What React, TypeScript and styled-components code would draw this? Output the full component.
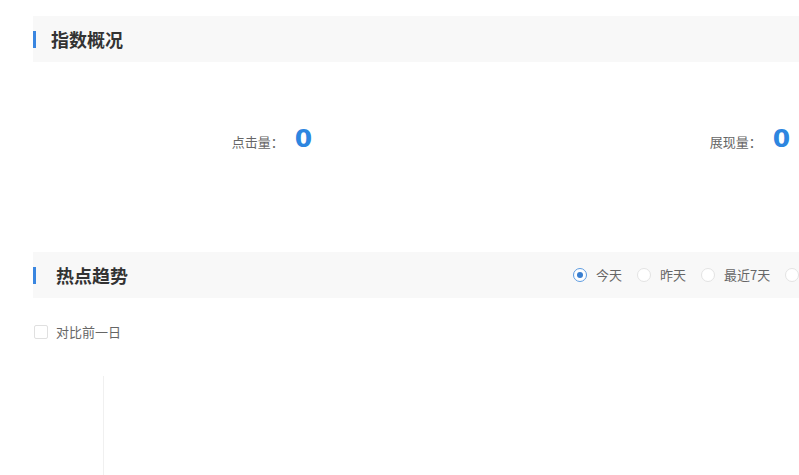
import React from "react";
import styled, { createGlobalStyle } from "styled-components";

const Global = createGlobalStyle`
  html, body { margin: 0; padding: 0; background: #fff; overflow: hidden; }
  body { font-family: "Liberation Sans", "Noto Sans CJK SC", sans-serif; }
  * { box-sizing: border-box; }
`;

const Page = styled.div`
  width: 766px;
  margin-left: 33px;
  padding-top: 16px;
  display: flex;
  flex-direction: column;
  overflow: hidden;
`;

const SectionHeader = styled.div`
  height: 46px;
  background: #f8f8f8;
  display: flex;
  align-items: center;
`;

const Accent = styled.span`
  width: 3px;
  height: 17px;
  background: #3a86e0;
  flex: none;
`;

const Title = styled.h2<{ $gap: number }>`
  margin: 0 0 0 ${(p) => p.$gap}px;
  font-family: "Noto Sans CJK SC", sans-serif;
  font-size: 18px;
  line-height: 24px;
  font-weight: 700;
  color: #333;
  flex: none;
`;

const StatsRow = styled.div`
  height: 190px;
  padding-top: 62px;
  display: grid;
  grid-template-columns: 478px 478px;
  align-items: start;
`;

const Stat = styled.div`
  display: flex;
  align-items: center;
  justify-content: center;
  height: 30px;
`;

const StatLabel = styled.span`
  font-family: "Noto Sans CJK SC", sans-serif;
  font-size: 13px;
  line-height: 18px;
  color: #666;
  margin-top: 6px;
`;

const StatValue = styled.span`
  margin-left: 11px;
  font-family: "DejaVu Sans", "Liberation Sans", sans-serif;
  font-size: 25px;
  font-weight: 700;
  line-height: 30px;
  color: #2d86e0;
`;

const RadioGroup = styled.div`
  margin-left: 445px;
  display: flex;
  align-items: center;
  gap: 15px;
  flex: none;
`;

const RadioItem = styled.label`
  display: flex;
  align-items: center;
  gap: 9px;
  font-family: "Noto Sans CJK SC", sans-serif;
  font-size: 13px;
  line-height: 18px;
  color: #666;
`;

const RadioCircle = styled.span<{ $on?: boolean }>`
  width: 14px;
  height: 14px;
  border-radius: 50%;
  border: 1px solid ${(p) => (p.$on ? "#5d9be0" : "#e3e3e3")};
  background: #fff;
  display: flex;
  align-items: center;
  justify-content: center;
  flex: none;
  &::after {
    content: "";
    width: 6px;
    height: 6px;
    border-radius: 50%;
    background: ${(p) => (p.$on ? "#3a7fd0" : "transparent")};
  }
`;

const CompareRow = styled.label`
  margin-top: 25px;
  margin-left: 1px;
  display: flex;
  align-items: center;
  gap: 8px;
  font-family: "Noto Sans CJK SC", sans-serif;
  font-size: 13px;
  line-height: 18px;
  color: #666;
`;

const CheckBox = styled.span`
  width: 14px;
  height: 14px;
  border: 1px solid #e0e0e0;
  border-radius: 2px;
  background: #fff;
`;

const Chart = styled.div`
  margin-top: 35px;
  height: 120px;
  padding-left: 70px;
  display: flex;
`;

const Axis = styled.div`
  width: 1px;
  height: 100%;
  background: #f0f0f0;
`;

const stats = [
  { label: "点击量：", value: 0 },
  { label: "展现量：", value: 0 },
];

const ranges = ["今天", "昨天", "最近7天"];

export default function App() {
  return (
    <>
      <Global />
      <Page>
        <SectionHeader>
          <Accent />
          <Title $gap={15}>指数概况</Title>
        </SectionHeader>
        <StatsRow>
          {stats.map((s) => (
            <Stat key={s.label}>
              <StatLabel>{s.label}</StatLabel>
              <StatValue>{s.value}</StatValue>
            </Stat>
          ))}
        </StatsRow>
        <SectionHeader>
          <Accent />
          <Title $gap={20}>热点趋势</Title>
          <RadioGroup>
            {ranges.map((r, i) => (
              <RadioItem key={r}>
                <RadioCircle $on={i === 0} />
                {r}
              </RadioItem>
            ))}
            <RadioCircle />
          </RadioGroup>
        </SectionHeader>
        <CompareRow>
          <CheckBox />
          对比前一日
        </CompareRow>
        <Chart>
          <Axis />
        </Chart>
      </Page>
    </>
  );
}
